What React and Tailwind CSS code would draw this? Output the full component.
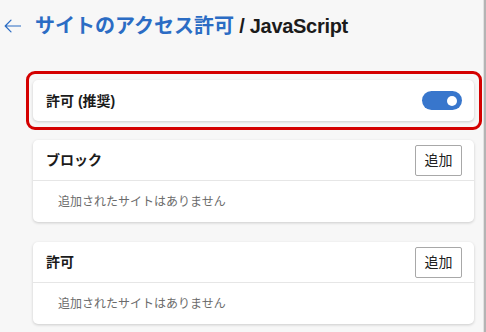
import React, { useState } from "react";

const font = { fontFamily: '"Liberation Sans", "Noto Sans CJK JP", sans-serif' };

const SiteList = ({ title }) => (
  <div className="bg-white rounded-[5px] shadow-[0_1px_3px_rgba(0,0,0,0.18)]">
    {/* Header */}
    <div className="h-[41px] flex items-center justify-between pl-[13px] pr-[12px] border-b border-[#e6e6e6]">
      <span className="text-[14px] font-bold text-[#1b1b1b] leading-none">{title}</span>
      <button className="w-[47px] h-[31px] border border-[#a8a8a8] rounded-[2px] bg-white text-[14px] text-[#222] leading-none">
        追加
      </button>
    </div>
    {/* Body */}
    <div className="h-[41px] flex items-center pl-[25px]">
      <span className="text-[12px] text-[#6b6b6b] leading-none">追加されたサイトはありません</span>
    </div>
  </div>
);

export default function App() {
  const [allowed, setAllowed] = useState(true);

  return (
    <div className="w-full h-[332px] bg-[#f7f7f7] flex overflow-hidden" style={font}>
      <div className="flex-1 flex flex-col">
        {/* Title */}
        <div className="h-[52px] flex items-center pl-[4px]">
          <svg width="17" height="14" viewBox="0 0 17 14" fill="none" className="text-[#2b6cc4]">
            <path d="M16.5 7H1.2M7 1.2L1.2 7L7 12.8" stroke="currentColor" strokeWidth="1.2" strokeLinecap="round" strokeLinejoin="round" />
          </svg>
          <h1 className="ml-[14px] text-[20px] font-bold leading-none">
            <span className="text-[#2b6cc4]">サイトのアクセス許可</span>
            <span className="text-[#1b1b1b] tracking-[-0.3px]"> / JavaScript</span>
          </h1>
        </div>

        <div className="mt-[19px] pl-[33px] pr-[9px] flex flex-col">
          {/* Highlighted default setting */}
          <div className="-ml-[7px] -mr-[8px] pl-[4px] pr-[5px] pt-[6px] pb-[6px] border-[3px] border-[#d40000] rounded-[9px]">
            <div className="h-[41px] bg-white rounded-[5px] shadow-[0_1px_3px_rgba(0,0,0,0.18)] flex items-center justify-between pl-[13px] pr-[12px]">
              <span className="text-[14px] font-bold text-[#1b1b1b] leading-none">許可 (推奨)</span>
              <button
                onClick={() => setAllowed(!allowed)}
                className={`w-[40px] h-[19px] rounded-full flex items-center px-[5px] ${
                  allowed ? "bg-[#3876cc] justify-end" : "bg-[#999] justify-start"
                }`}
              >
                <span className="block w-[10px] h-[10px] rounded-full bg-white"></span>
              </button>
            </div>
          </div>

          <div className="mt-[10px]">
            <SiteList title="ブロック" />
          </div>
          <div className="mt-[20px]">
            <SiteList title="許可" />
          </div>
        </div>
      </div>

      {/* Scrollbar edge */}
      <div className="w-[3px] h-full border-l border-[#e2e2e2] bg-[#b4b4b4]"></div>
    </div>
  );
}
